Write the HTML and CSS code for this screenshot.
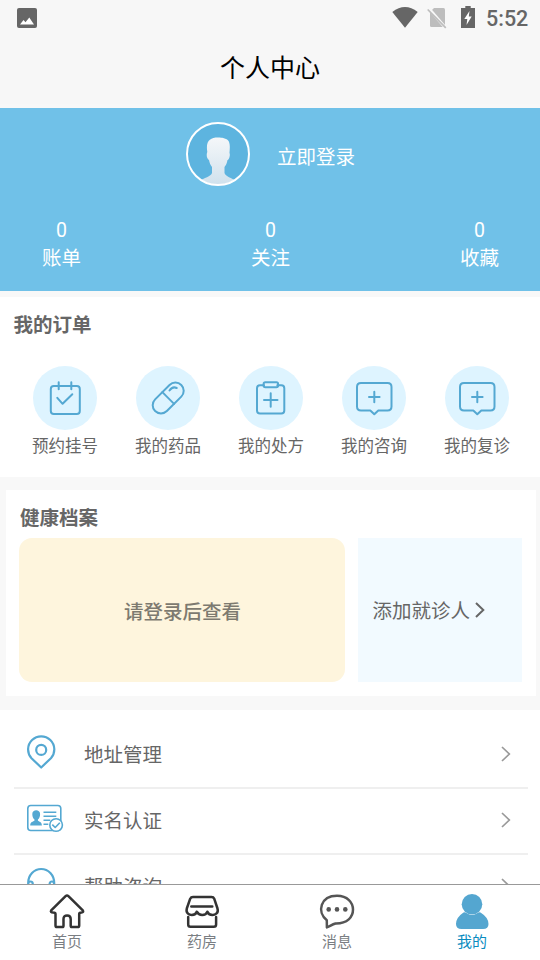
FILE: index.html
```html
<!DOCTYPE html>
<html lang="zh-CN">
<head>
<meta charset="utf-8">
<title>个人中心</title>
<link rel="stylesheet" href="styles.css">
</head>
<body>
<div class="app">
  <header class="header">
    <div class="status">
      <svg class="status-photo" width="20" height="20" viewBox="0 0 20 20"><rect width="20" height="20" rx="2" fill="#666"/><path d="M3 16.500 6.500 12l2 2.200L12.300 9.500 17 16.500z" fill="#fff"/></svg>
      <svg class="status-wifi" width="26" height="22" viewBox="0 0 26 22"><path d="M.3 5.900Q13-3.700 25.700 5.900L13 21.700z" fill="#666"/></svg>
      <svg class="status-sim" width="20" height="22" viewBox="0 0 20 22"><path d="M7 1h9.500q1.500 0 1.500 1.500v16q0 1.500-1.500 1.500h-12q-1.500 0-1.500-1.500V5z" fill="#bdbdbd"/><path d="M1.500 1 19 21.500" stroke="#f7f7f7" stroke-width="3"/><path d="M.7 2.500 18.800 20.800" stroke="#bdbdbd" stroke-width="1.700"/></svg>
      <svg class="status-battery" width="14" height="22" viewBox="0 0 14 22"><path d="M4.300 0h5.400v2H14v20H0V2h4.300z" fill="#666"/><path d="M8.500 5 3.300 13h3L5.500 19l5.200-8.500H7.800z" fill="#fff"/></svg>
      <span class="clock">5:52</span>
    </div>
    <h1 class="title">个人中心</h1>
  </header>

  <main class="content">
    <section class="profile">
      <div class="login">
        <svg width="64" height="64" viewBox="0 0 64 64">
          <defs>
            <linearGradient id="person" x1="0" y1="0" x2="0" y2="1"><stop offset="0" stop-color="#f5f7f9"/><stop offset="1" stop-color="#cfe1ed"/></linearGradient>
            <clipPath id="disc"><circle cx="32" cy="32" r="30.500"/></clipPath>
          </defs>
          <circle cx="32" cy="32" r="31" fill="#5db4df"/>
          <path clip-path="url(#disc)" fill="url(#person)" d="M21.300 30C19.500 19 24 15.500 32 15.500c5 0 6 .8 8 1.500 4.500 2 4 7 3.500 14 1 2-.5 7-2 7-.5 3-1.500 5-3 7v6c1 3.500 7 5 12 8V64H13v-5c5-3 12-4.500 13-8v-6c-1.500-2-2.500-4-3-7-2-1-3-5-1.700-8z"/>
          <circle cx="32" cy="32" r="31" fill="none" stroke="#fff" stroke-width="2"/>
        </svg>
        <span class="login-text">立即登录</span>
      </div>
      <div class="stats">
        <div class="stat"><span class="stat-num">0</span><span>账单</span></div>
        <div class="stat"><span class="stat-num">0</span><span>关注</span></div>
        <div class="stat"><span class="stat-num">0</span><span>收藏</span></div>
      </div>
    </section>

    <section class="orders">
      <h2 class="heading">我的订单</h2>
      <div class="order-grid">
        <div class="order">
          <svg class="order-icon" viewBox="0 0 64 64"><rect x="17.800" y="19.900" width="29" height="28" rx="3"/><path d="M25.700 16.200v7M38.300 16.200v7M24.300 31.800l5.300 6L39.300 28.200"/></svg>
          <span>预约挂号</span>
        </div>
        <div class="order">
          <svg class="order-icon" viewBox="0 0 64 64"><g transform="translate(-.8)"><g transform="rotate(-45 33 32)"><rect x="14.500" y="23.700" width="37" height="16.600" rx="8.300"/><path d="M33 23.700v16.600"/></g><path d="M34.300 24.500q3-4.500 7.200-2.500"/></g></svg>
          <span>我的药品</span>
        </div>
        <div class="order">
          <svg class="order-icon" viewBox="0 0 64 64"><path d="M25 19.300h-4q-3 0-3 3V44.500q0 3 3 3H42.300q3 0 3-3V22.300q0-3-3-3h-4"/><rect x="24.600" y="16.300" width="14.500" height="5" rx="1.700"/><path d="M31.700 27.200v13.500M25 33.900h13.500"/></svg>
          <span>我的处方</span>
        </div>
        <div class="order">
          <svg class="order-icon" viewBox="0 0 64 64"><path d="M19 17H45.500q4 0 4 4V40.500q0 4-4 4H36.300L32.300 48.300 28.300 44.500H19q-4 0-4-4V21q0-4 4-4zM32.300 25.700v10.600M27 31h10.600"/></svg>
          <span>我的咨询</span>
        </div>
        <div class="order">
          <svg class="order-icon" viewBox="0 0 64 64"><path d="M19 17H45.500q4 0 4 4V40.500q0 4-4 4H36.300L32.300 48.300 28.300 44.500H19q-4 0-4-4V21q0-4 4-4zM32.300 25.700v10.600M27 31h10.600"/></svg>
          <span>我的复诊</span>
        </div>
      </div>
    </section>

    <section class="records">
      <h2 class="heading">健康档案</h2>
      <div class="record-row">
        <div class="record-view">请登录后查看</div>
        <div class="record-add"><span>添加就诊人</span><svg width="10" height="16" viewBox="0 0 10 16"><path d="M1 1 8.300 8 1 15" fill="none" stroke="#666" stroke-width="2"/></svg></div>
      </div>
    </section>

    <section class="menu">
      <div class="menu-row">
        <svg class="menu-icon" viewBox="0 0 40 36"><path d="M15.200 32.500 5.500 23.200A13.100 13.100 0 1 1 24.900 23.200z"/><circle cx="15.200" cy="14.900" r="5"/></svg>
        <span class="menu-text">地址管理</span>
        <svg class="menu-arrow" viewBox="0 0 10 16"><path d="M1 1 8.300 8 1 15"/></svg>
      </div>
      <div class="menu-row">
        <svg class="menu-icon thin" viewBox="0 0 40 36"><rect x="1.800" y="4.500" width="33" height="25" rx="3"/><path class="solid" d="M6.300 13c0-5 7.800-5 7.800 0 0 3-1 4.500-2.200 5.500v1c1 1.500 4 1 4 5H4.200c0-4 3-3.500 4.300-5v-1c-1.200-1-2.200-2.500-2.200-5.500z"/><path d="M17.500 11.200H30.300M17.500 15.200H30.300M17.500 19.200H24.300M17.500 23.200H22.300"/><circle cx="30.100" cy="24" r="6.300" fill="#fff"/><path d="M26.300 23.700 29.200 26.500 33.800 21.700"/></svg>
        <span class="menu-text">实名认证</span>
        <svg class="menu-arrow" viewBox="0 0 10 16"><path d="M1 1 8.300 8 1 15"/></svg>
      </div>
      <div class="menu-row">
        <svg class="menu-icon" viewBox="0 0 40 36"><path d="M2.200 18.500V16a13 14 0 0 1 26 0v2.500M2.200 17.500q0-3 2.300-3t2.300 3v8H3M28.200 17.500q0-3-2.300-3t-2.300 3v8H27"/></svg>
        <span class="menu-text">帮助咨询</span>
        <svg class="menu-arrow" viewBox="0 0 10 16"><path d="M1 1 8.300 8 1 15"/></svg>
      </div>
    </section>
  </main>

  <nav class="tabs">
    <div class="tab">
      <svg class="tab-icon dark" viewBox="0 0 36 37"><path d="M16.600 3.100q1.400-1.300 2.800 0L33.800 17.300q1.200 2-1.300 2.200-2.300 0-2.300 1.500V32.400q0 1.600-1.600 1.600H22.900q-1.200 0-1.200-1.300V26q0-3.500-3.600-3.500T14.500 26v6.700q0 1.300-1.200 1.300H8.100q-1.600 0-1.600-1.600V21q0-1.500-2.300-1.500-3.200-.2-2-2.200z"/></svg>
      <span>首页</span>
    </div>
    <div class="tab">
      <svg class="tab-icon dark" viewBox="0 0 36 37"><path d="M9 4H27.500q2 0 2.700 1.700L33.500 15.500C35 20.500 30.500 22 28.500 22S24 20.700 23.400 18.700C22.500 21 20.500 22 18.200 22S14 21 12.800 18.700C12.200 20.700 10 22 7.800 22S1.500 20.500 2.800 15.500L6.200 5.700Q7 4 9 4zM7.300 13.500H28.300M4.200 24v7.500q0 2.300 2.300 2.300H29.800q2.300 0 2.300-2.300V24"/></svg>
      <span>药房</span>
    </div>
    <div class="tab">
      <svg class="tab-icon gray" viewBox="0 0 36 37"><path d="M7.800 27.200C-2.500 19 1.500 2.800 18 2.800 28.500 2.800 34 9.500 34 16.600 34 24 28.500 30.700 16.500 30.500 13 31.500 11 33.300 7.900 34.400z"/><g fill="#555" stroke="none"><circle cx="9.700" cy="16.400" r="2.300"/><circle cx="18" cy="16.400" r="2.300"/><circle cx="26.300" cy="16.400" r="2.300"/></g></svg>
      <span>消息</span>
    </div>
    <div class="tab active">
      <svg class="tab-icon" viewBox="0 0 36 37"><g fill="#54a6d0"><circle cx="18" cy="11.200" r="10.300"/><path d="M9.500 19.500q1.500-.7 3 .5 5.500 4 11 0 1.500-1.200 3-.5 8 5 8 11.500 0 5-5.500 5H7.500Q2 36 2 31q0-6.500 7.500-11.500z"/></g></svg>
      <span>我的</span>
    </div>
  </nav>
</div>
</body>
</html>
```
FILE: styles.css
```css
* { box-sizing: border-box; }

body {
  margin: 0;
  background: #f8f8f8;
  color: #666;
  font-family: "Noto Sans CJK SC", sans-serif;
  font-size: 19.5px;
}

svg { display: block; flex: none; }

.app {
  display: flex;
  flex-direction: column;
  width: 540px;
  height: 960px;
  overflow: hidden;
}

.header {
  flex: none;
  height: 104px;
  background: #f7f7f7;
}

.status {
  display: flex;
  align-items: flex-start;
  height: 36px;
  padding: 6px 11px 0 17px;
}

.status-photo { margin-top: 2px; }
.status-wifi { margin-left: 355px; }
.status-sim { margin-left: 9px; margin-top: 1px; }
.status-battery { margin-left: 13.5px; }

.clock {
  margin-left: 11.5px;
  font: 500 21.5px/26px Roboto, sans-serif;
}

.title {
  margin: 0;
  padding-top: 11px;
  color: #000;
  font-size: 25px;
  font-weight: 400;
  line-height: 38px;
  text-align: center;
}

.content {
  flex: 1;
  min-height: 0;
  overflow: hidden;
  padding-top: 4px;
}

.profile {
  height: 183px;
  padding-top: 14px;
  background: #70c1e8;
  color: #fff;
}

.login {
  display: flex;
  gap: 27px;
  height: 94px;
  padding-left: 186px;
}

.login-text { line-height: 68px; }

.stats {
  display: flex;
  justify-content: space-between;
  padding: 0 41px 0 42px;
}

.stat {
  display: flex;
  flex-direction: column;
  align-items: center;
  line-height: 24px;
}

.stat-num {
  font-family: Roboto, sans-serif;
  line-height: 29px;
}

.heading {
  margin: 0;
  font-size: 19.5px;
  font-weight: 700;
  line-height: 28px;
}

.orders {
  height: 180px;
  margin-top: 6px;
  padding: 13px 12px 0 13.5px;
  background: #fff;
}

.order-grid {
  display: grid;
  grid-template-columns: repeat(5, 103px);
  margin-top: 28px;
}

.order {
  display: flex;
  flex-direction: column;
  align-items: center;
  font-size: 16.5px;
  line-height: 30px;
}

.order-icon {
  width: 64px;
  height: 64px;
  border-radius: 50%;
  background: #def4ff;
  fill: none;
  stroke: #54a8d2;
  stroke-width: 2;
  stroke-linecap: round;
  stroke-linejoin: round;
}

.records {
  height: 206px;
  margin: 13px 4px 0 6px;
  padding: 13px 14px 0 13px;
  background: #fff;
}

.records .heading { padding-left: 1px; }

.record-row {
  display: flex;
  gap: 13px;
  height: 144px;
  margin-top: 7px;
}

.record-view {
  width: 326px;
  padding-left: 1px;
  border-radius: 13px;
  background: #fef5dd;
  color: #7d7a70;
  font-weight: 500;
  line-height: 146px;
  text-align: center;
}

.record-add {
  display: flex;
  align-items: center;
  flex: 1;
  gap: 5px;
  padding: 0 0 1px 14.5px;
  background: #f2faff;
}

.menu {
  margin-top: 13.5px;
  padding: 13.5px 12px 0 13.5px;
  background: #fff;
}

.menu-row {
  display: flex;
  align-items: center;
  height: 66px;
  padding: 0 17.5px 4px 12.5px;
  border-bottom: 2px solid #efefef;
}

.menu-icon {
  width: 40px;
  height: 36px;
  fill: none;
  stroke: #54a8d2;
  stroke-width: 2.2;
  stroke-linejoin: round;
}

.menu-icon.thin { stroke-width: 1.6; }
.solid { fill: #54a8d2; stroke: none; }

.menu-text { flex: 1; margin-left: 18px; }

.menu-arrow {
  width: 10px;
  height: 16px;
  margin-top: 2px;
  fill: none;
  stroke: #999;
  stroke-width: 1.7;
}

.tabs {
  display: grid;
  grid-template-columns: repeat(4, 135px);
  flex: none;
  height: 76px;
  margin-left: -1px;
  padding-top: 8px;
  border-top: 1px solid #999;
  background: #fff;
}

.tab {
  display: flex;
  flex-direction: column;
  align-items: center;
  color: #7a7e83;
  font-size: 15px;
  line-height: 22px;
}

.tab span { padding-left: 1px; }

.tab.active { color: #0a8cbf; }

.tab-icon {
  width: 36px;
  height: 37px;
  fill: none;
  stroke-width: 2.5;
  stroke-linecap: round;
  stroke-linejoin: round;
}

.dark { stroke: #333; }
.gray { stroke: #555; }
```
